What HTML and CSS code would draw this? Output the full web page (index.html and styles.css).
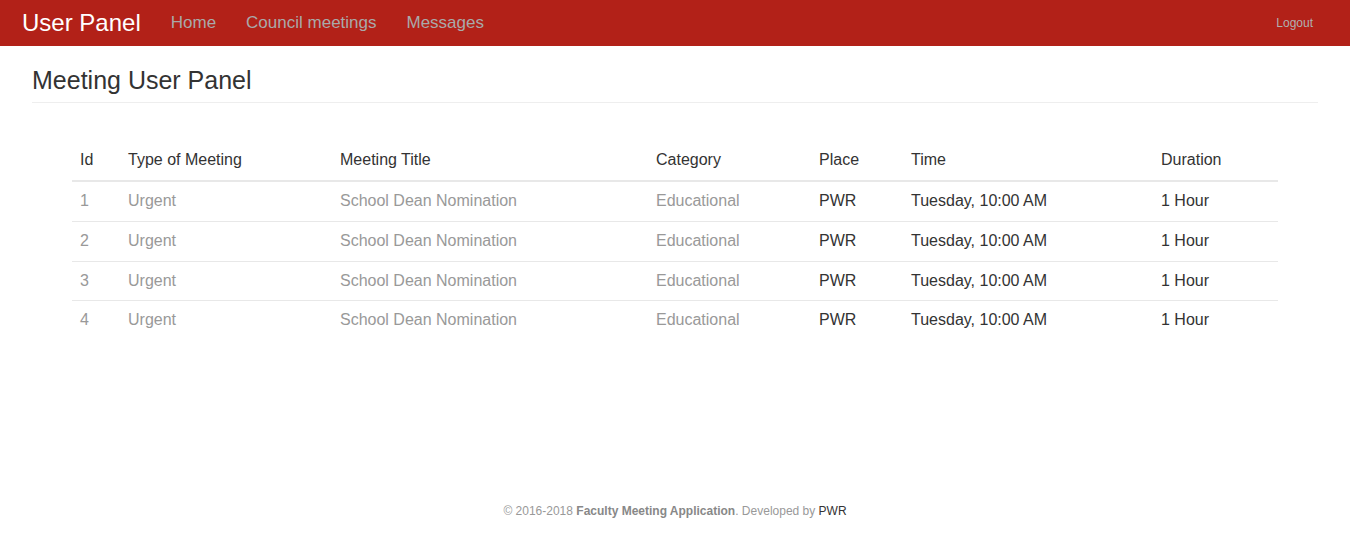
FILE: index.html
```html
<!DOCTYPE html>
<html lang="en">
<head>
<meta charset="utf-8">
<title>User Panel</title>
<link rel="stylesheet" href="styles.css">
</head>
<body>
<nav class="navbar">
  <a class="brand" href="#">User Panel</a>
  <ul class="nav">
    <li><a href="#">Home</a></li>
    <li><a href="#">Council meetings</a></li>
    <li><a href="#">Messages</a></li>
  </ul>
  <a class="logout" href="#">Logout</a>
</nav>
<main class="page">
  <h1 class="page-title">Meeting User Panel</h1>
  <div class="table-wrap">
    <table class="meetings">
      <colgroup>
        <col class="c-id"><col class="c-type"><col class="c-title"><col class="c-cat"><col class="c-place"><col class="c-time"><col class="c-dur">
      </colgroup>
      <thead>
        <tr><th>Id</th><th>Type of Meeting</th><th>Meeting Title</th><th>Category</th><th>Place</th><th>Time</th><th>Duration</th></tr>
      </thead>
      <tbody>
        <tr><td class="muted">1</td><td class="muted">Urgent</td><td class="muted">School Dean Nomination</td><td class="muted">Educational</td><td>PWR</td><td>Tuesday, 10:00 AM</td><td>1 Hour</td></tr>
        <tr><td class="muted">2</td><td class="muted">Urgent</td><td class="muted">School Dean Nomination</td><td class="muted">Educational</td><td>PWR</td><td>Tuesday, 10:00 AM</td><td>1 Hour</td></tr>
        <tr><td class="muted">3</td><td class="muted">Urgent</td><td class="muted">School Dean Nomination</td><td class="muted">Educational</td><td>PWR</td><td>Tuesday, 10:00 AM</td><td>1 Hour</td></tr>
        <tr><td class="muted">4</td><td class="muted">Urgent</td><td class="muted">School Dean Nomination</td><td class="muted">Educational</td><td>PWR</td><td>Tuesday, 10:00 AM</td><td>1 Hour</td></tr>
      </tbody>
    </table>
  </div>
</main>
<footer class="footer">
  © 2016-2018 <strong>Faculty Meeting Application</strong>. Developed by <a href="#">PWR</a>
</footer>
</body>
</html>
```

FILE: styles.css
```css
* { box-sizing: border-box; }
html, body { margin: 0; padding: 0; }
body {
  font-family: "Liberation Sans", Arial, sans-serif;
  font-size: 14px;
  line-height: 1.42857;
  color: #333;
  background: #fff;
}
a { text-decoration: none; }

.navbar {
  height: 46px;
  background: #b22118;
  display: flex;
  align-items: center;
  padding: 0 22px;
}
.brand {
  color: #fff;
  font-size: 24px;
  line-height: 46px;
  margin-right: 15px;
}
.nav {
  display: flex;
  list-style: none;
  margin: 0;
  padding: 0;
  flex: 1;
}
.nav a {
  display: block;
  padding: 0 15px;
  color: #a9a9a9;
  font-size: 17px;
  line-height: 44px;
}
.logout {
  color: #b0b0b0;
  font-size: 12px;
  margin-right: 15px;
  line-height: 44px;
}

.page {
  padding: 0 32px;
}
.page-title {
  margin: 0;
  padding: 19px 0 7px;
  font-size: 25px;
  font-weight: 400;
  line-height: 30px;
  color: #333;
  border-bottom: 1px solid #eee;
}
.table-wrap {
  padding: 38px 40px 0;
}
.meetings {
  width: 100%;
  border-collapse: collapse;
  table-layout: fixed;
  font-size: 16px;
}
.c-id { width: 48px; }
.c-type { width: 212px; }
.c-title { width: 316px; }
.c-cat { width: 163px; }
.c-place { width: 92px; }
.c-time { width: 250px; }
.c-dur { width: 125px; }
.meetings th {
  text-align: left;
  font-weight: 400;
  padding: 8px;
  line-height: 1.42857;
  border-bottom: 2px solid #e8e8e8;
  color: #333;
}
.meetings td {
  padding: 8px;
  line-height: 1.42857;
  border-top: 1px solid #e8e8e8;
  color: #333;
  white-space: nowrap;
}
.meetings tbody tr:first-child td { border-top: 0; }
.meetings td.muted { color: #999; }

.footer {
  margin-top: 163px;
  text-align: center;
  font-size: 12px;
  color: #999;
}
.footer strong { font-weight: 700; color: #888; }
.footer a { color: #333; }
```
